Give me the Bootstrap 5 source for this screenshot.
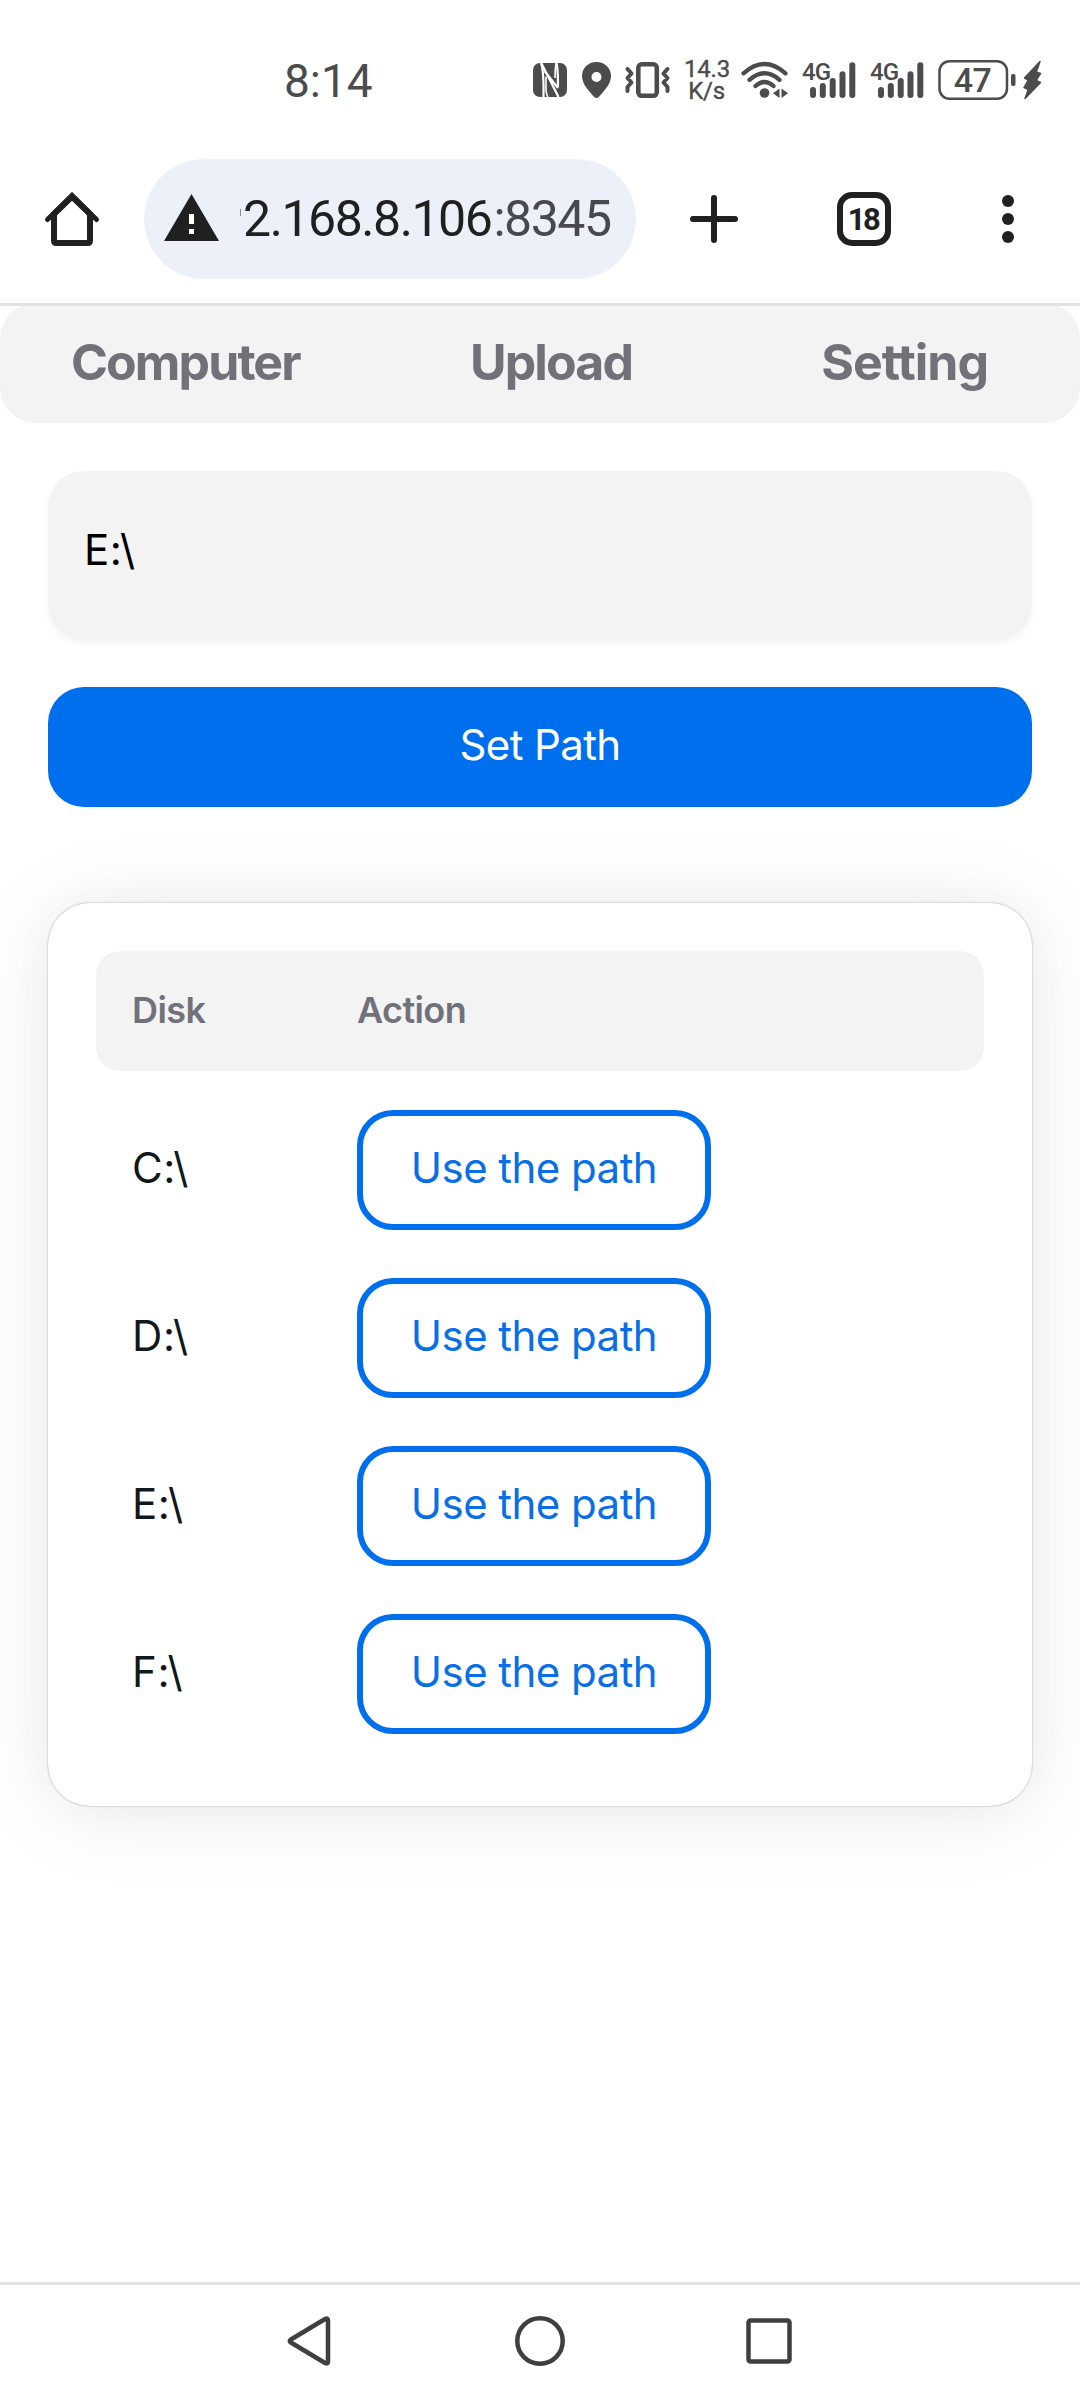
<!DOCTYPE html>
<html lang="en">
<head>
<meta charset="utf-8">
<meta name="viewport" content="width=device-width, initial-scale=1">
<title>Setting</title>
<link href="https://cdn.jsdelivr.net/npm/bootstrap@5.3.0/dist/css/bootstrap.min.css" rel="stylesheet">
<style>
  body { width: 1080px; height: 2400px; background: #fff; font-family: Inter, "Noto Sans", sans-serif; font-size: 42px; letter-spacing: .2px; color: #11181c; overflow: hidden; }
  svg { display: block; flex: none; overflow: visible; }
  .statusbar { height: 159px; padding: 40px 38px 39px 284px; font-family: Roboto, sans-serif; color: #4c4c4c; letter-spacing: 0; }
  .clock { font-size: 46px; line-height: 82px; height: 80px; }
  .status-icons { height: 80px; }
  .status-icons svg { fill: #4c4c4c; }
  .speed { width: 45px; margin: 0 11px 0 13px; font-size: 24px; line-height: 22px; text-align: center; letter-spacing: -.2px; -webkit-text-stroke: .4px #4c4c4c; }
  .sig { font: 500 24px Roboto, sans-serif; letter-spacing: -1px; }
  .toolbar { height: 120px; padding-left: 44px; color: #202020; }
  .omnibox { width: 492px; height: 120px; margin-left: 44px; padding-left: 20px; border-radius: 60px; background: #ecf0f9; font-family: Roboto, sans-serif; font-size: 50px; letter-spacing: -1.45px; line-height: 122px; white-space: nowrap; }
  .sliver { width: 1px; height: 7px; margin: -13px 2px 0 20px; background: #8b8f95; }
  .port { color: #47494c; margin-left: 2px; }
  .tabs-count { width: 54px; height: 54px; border: 6px solid #202020; border-radius: 15px; margin-left: 99px; font: 700 31px/43px Roboto, sans-serif; letter-spacing: -2.6px; padding-right: 2px; }
  .rule { position: relative; z-index: 1; height: 3px; background: #e2e2e0; flex: none; }
  .topnav { height: 120px; margin-top: -3px; padding: 0 92px 2px 71px; border-radius: 36px; background: #f3f3f3; font-size: 50px; font-weight: 700; letter-spacing: -1.9px; color: #71717a; }
  .topnav a { color: inherit; text-decoration: none; }
  .topnav a:nth-child(2) { margin-right: 19px; }
  .topnav a:last-child { letter-spacing: -1px; }
  .toolbar-gap { height: 24px; flex: none; }
  .content { padding: 48px 48px 0; }
  .path-field { height: 169px; padding: 49px 36px; border: 0; border-radius: 36px; background: #f3f3f3; color: #000; font-size: 42px; line-height: 60px; letter-spacing: .6px; box-shadow: 0 3px 6px rgba(0,0,0,.05); resize: none; overflow: hidden; }
  .set-btn { height: 120px; margin-top: 47px; padding: 0 0 5px; border: 0; border-radius: 36px; background: #006fee; font-size: 42px; letter-spacing: -.6px; }
  .disk-card { margin-top: 96px; padding: 48px; border: 0; border-radius: 42px; box-shadow: 0 0 45px rgba(0,0,0,.03), 0 6px 90px rgba(0,0,0,.08), 0 0 2px rgba(0,0,0,.35); color: inherit; }
  .grid-head { height: 120px; margin-bottom: 15px; padding: 0 36px 2px; border-radius: 24px; background: #f3f3f3; color: #71717a; font-size: 36px; font-weight: 600; letter-spacing: -.6px; }
  .grid-row { height: 168px; padding: 0 36px; }
  .disk-col { width: 225px; flex: none; }
  .grid-row .disk-col { padding-bottom: 5px; letter-spacing: .6px; }
  .use-btn { width: 354px; height: 120px; padding: 0 0 5px; border: 6px solid #006fee; border-radius: 36px; color: #0a6fe6; font-size: 42px; letter-spacing: -.55px; }
  .sysnav { height: 115px; padding: 0 288px 3px 287px; }
</style>
<script src="https://cdn.jsdelivr.net/npm/bootstrap@5.3.0/dist/js/bootstrap.bundle.min.js"></script>
</head>
<body class="d-flex flex-column m-0">

<header class="statusbar d-flex justify-content-between flex-shrink-0">
  <div class="clock">8:14</div>
  <div class="status-icons d-flex align-items-center">
    <!-- NFC -->
    <svg width="34" height="40" viewBox="533 60 34 40"><rect x="533" y="63" width="34" height="34" rx="7"/><path d="M541 63Q544 72 543.500 97M541.500 63.500 558.500 97M556.500 63Q558 69 558 87M544.500 71 558 88" fill="none" stroke="#fff" stroke-width="2.200"/><path d="M546 76.500v14q.5 4 2 7M556 63q-1 7-1 15" fill="none" stroke="#fff" stroke-width="1.600"/></svg>
    <!-- location -->
    <svg width="31" height="40" viewBox="581 60 31 40" style="margin-left:14px"><path fill-rule="evenodd" d="M596.500 62c8.500 0 14.500 6.300 14.500 14 0 8.500-7.500 15.500-12 20.700q-2.500 2.600-5 0C589.500 91.500 582 84.500 582 76c0-7.700 6-14 14.500-14zm0 10a5 5 0 1 0 0 10 5 5 0 0 0 0-10z"/></svg>
    <!-- vibrate -->
    <svg width="47" height="40" viewBox="624 60 47 40" style="margin-left:12px"><g fill="none" stroke="#4c4c4c" stroke-linecap="round" stroke-linejoin="round"><rect x="638.300" y="64.300" width="18.500" height="31.500" rx="3.500" stroke-width="4.600"/><path d="M627.500 69l4 4.500-4 4.500 4 4.500-4 4.500 0 4M667.500 69l-4 4.500 4 4.500-4 4.500 4 4.500 0 4" stroke-width="4"/></g></svg>
    <div class="speed">14.3<br>K/s</div>
    <!-- wifi -->
    <svg width="49" height="40" viewBox="740 60 49 40"><g fill="none" stroke="#4c4c4c" stroke-width="4.300" stroke-linecap="round"><path d="M743.500 73.300q21-18.500 42 0M749.500 79.800q15-13 30 0M755.500 86q9-8 18 0"/></g><circle cx="764.500" cy="93" r="4.800"/><path d="M779.500 88.500v9.500l-6.500-4.700zM781.500 88.500v9.500l6.500-4.700z"/></svg>
    <!-- mobile signal, both SIMs -->
    <svg class="sig" width="54" height="40" viewBox="802 60 54 40" style="margin-left:13px"><text x="802" y="79.500">4G</text><path d="M813 90v5M822.800 86v9M832.700 81v14M842.500 74.300v20.700M852.300 65.300v29.700" stroke="#4c4c4c" stroke-width="6" stroke-linecap="round"/></svg>
    <svg class="sig" width="54" height="40" viewBox="802 60 54 40" style="margin-left:14px"><text x="802" y="79.500">4G</text><path d="M813 90v5M822.800 86v9M832.700 81v14M842.500 74.300v20.700M852.300 65.300v29.700" stroke="#4c4c4c" stroke-width="6" stroke-linecap="round"/></svg>
    <!-- battery -->
    <svg width="78" height="40" viewBox="938 60 78 40" style="margin-left:14px"><rect x="939.500" y="61.300" width="67.500" height="37.400" rx="10" fill="none" stroke="#4c4c4c" stroke-width="2.500"/><rect x="1011" y="74" width="4.500" height="12" rx="2"/><text x="972.500" y="92" text-anchor="middle" font-family="Roboto" font-weight="500" font-size="34" letter-spacing="-.5">47</text></svg>
    <svg width="19" height="40" viewBox="1023 60 19 40" style="margin-left:7px"><path d="M1040 61.500 1024.500 78l3.800 2-4.300 7.500 4.300 2L1025 98.500 1040.500 82.500l-4.500-2L1040.500 73.500l-4.200-1.500z" stroke="#4c4c4c" stroke-width="1.500" stroke-linejoin="round"/></svg>
  </div>
</header>

<div class="toolbar d-flex align-items-center flex-shrink-0">
  <svg width="56" height="56" viewBox="44 191 56 56" fill="none" stroke="#202020" stroke-width="6"><path d="M47.500 219.500 72 195.500 96.500 219.500" stroke-width="5" stroke-linecap="round"/><path d="M54 214v26.500q0 2.500 2.500 2.500h31q2.500 0 2.500-2.500V214L72 196.500z"/></svg>
  <div class="omnibox d-flex align-items-center">
    <svg width="56" height="48" viewBox="164 193 56 48"><path d="M191.500 192 219 239h-55z" fill="#202020"/><path d="M189 212h5v10h-5zM189 227h5v5h-5z" fill="#fff"/></svg>
    <i class="sliver"></i><span>2.168.8.106</span><span class="port">:8345</span>
  </div>
  <svg width="48" height="48" viewBox="0 0 48 48" style="margin-left:54px"><path d="M24 3v42M3 24h42" stroke="#202020" stroke-width="6" stroke-linecap="round"/></svg>
  <div class="tabs-count text-center">18</div>
  <svg width="12" height="48" viewBox="0 0 12 48" fill="#202020" style="margin-left:111px"><circle cx="6" cy="6" r="6"/><circle cx="6" cy="24" r="6"/><circle cx="6" cy="42" r="6"/></svg>
</div>
<div class="toolbar-gap"></div>
<div class="rule"></div>

<nav class="topnav d-flex justify-content-between align-items-center flex-shrink-0">
  <a href="#">Computer</a><a href="#">Upload</a><a href="#">Setting</a>
</nav>

<main class="content flex-grow-1">
  <textarea class="path-field form-control" aria-label="Path">E:\</textarea>
  <button class="set-btn btn btn-primary w-100">Set Path</button>

  <section class="disk-card card">
    <div class="grid-head d-flex align-items-center"><div class="disk-col">Disk</div><div>Action</div></div>
    <div class="grid-row d-flex align-items-center"><div class="disk-col">C:\</div><button class="use-btn btn">Use the path</button></div>
    <div class="grid-row d-flex align-items-center"><div class="disk-col">D:\</div><button class="use-btn btn">Use the path</button></div>
    <div class="grid-row d-flex align-items-center"><div class="disk-col">E:\</div><button class="use-btn btn">Use the path</button></div>
    <div class="grid-row d-flex align-items-center"><div class="disk-col">F:\</div><button class="use-btn btn">Use the path</button></div>
  </section>
</main>

<div class="rule"></div>
<footer class="sysnav d-flex justify-content-between align-items-center flex-shrink-0">
  <svg width="44" height="52" viewBox="0 0 44 52" fill="none" stroke="#3f3f3f" stroke-width="4.500" stroke-linejoin="round"><path d="M3.500 24.800Q2 26 3.500 27.200L38.500 48.200Q41 49 41 46.500V5.500Q41 3 38.500 3.800z"/></svg>
  <svg width="50" height="52" viewBox="0 0 50 52" fill="none" stroke="#3f3f3f" stroke-width="4.500"><circle cx="26" cy="26" r="22.700"/></svg>
  <svg width="46" height="52" viewBox="0 0 46 52" fill="none" stroke="#3f3f3f" stroke-width="4.500"><rect x="2.500" y="5.500" width="41" height="41" rx="2"/></svg>
</footer>
</body>
</html>
